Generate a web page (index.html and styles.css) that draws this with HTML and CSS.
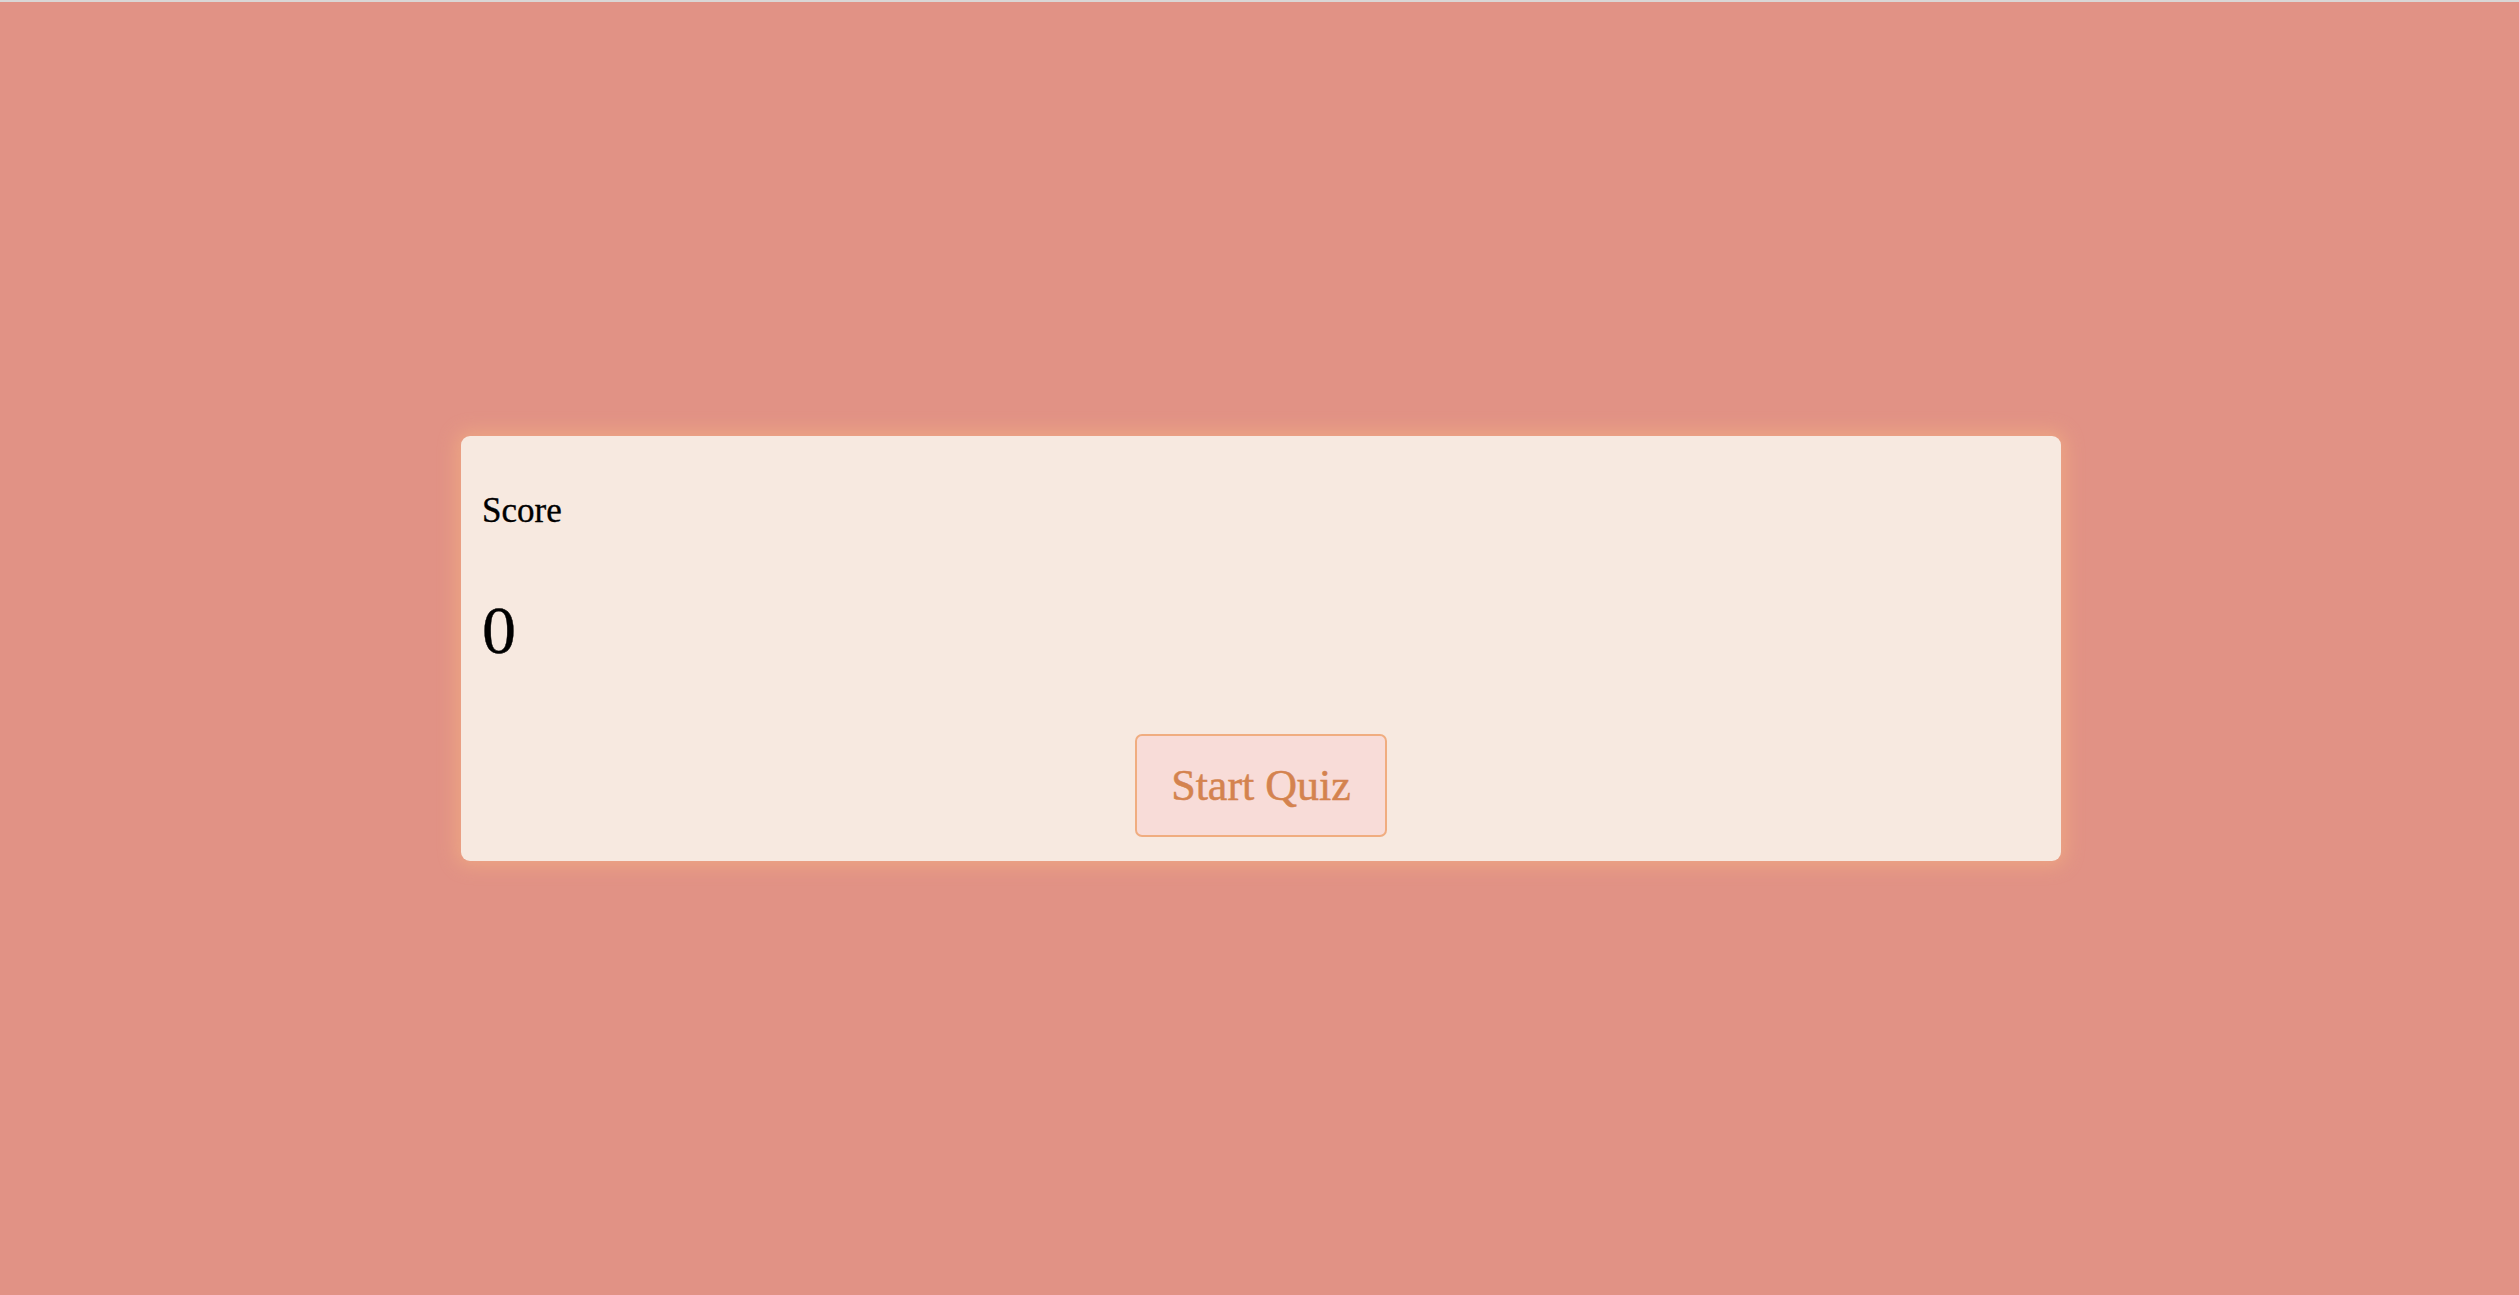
FILE: index.html
```html
<!DOCTYPE html>
<html lang="en">
<head>
<meta charset="utf-8">
<title>Quiz</title>
<link rel="stylesheet" href="styles.css">
</head>
<body>
<main class="card">
  <h2 class="score-label">Score</h2>
  <p class="score-value">0</p>
  <div class="actions">
    <button class="start-btn" type="button">Start Quiz</button>
  </div>
</main>
</body>
</html>
```
FILE: styles.css
```css
html {
  border-top: 2px solid #d9d6d5;
  background: #e19285;
  overflow: hidden;
}
body {
  margin: 0;
  height: calc(100vh - 2px);
  display: flex;
  align-items: center;
  justify-content: center;
  font-family: "Liberation Serif", "DejaVu Serif", serif;
  color: #000;
}
.card {
  width: 1600px;
  margin-left: 3px;
  box-sizing: border-box;
  background: #f7e9e0;
  border-radius: 9px;
  padding: 20px 21px 24px;
  box-shadow: 0 0 18px 5px #eda583;
}
.score-label {
  margin: 35px 0 0;
  font-size: 35px;
  line-height: 40px;
  font-weight: 400;
  -webkit-text-stroke: 0.35px #000;
}
.score-value {
  margin: 61px 0 0;
  font-size: 68px;
  line-height: 76px;
  -webkit-text-stroke: 0.4px #000;
}
.actions {
  margin-top: 66px;
  display: flex;
  justify-content: center;
}
.start-btn {
  width: 252px;
  height: 103px;
  box-sizing: border-box;
  background: #f8dcd8;
  border: 2px solid #f0ad80;
  border-radius: 7px;
  color: #d4834f;
  font-family: "Liberation Serif", "DejaVu Serif", serif;
  font-size: 44px;
  padding: 0;
  cursor: pointer;
  -webkit-text-stroke: 0.5px #d4834f;
}
```
